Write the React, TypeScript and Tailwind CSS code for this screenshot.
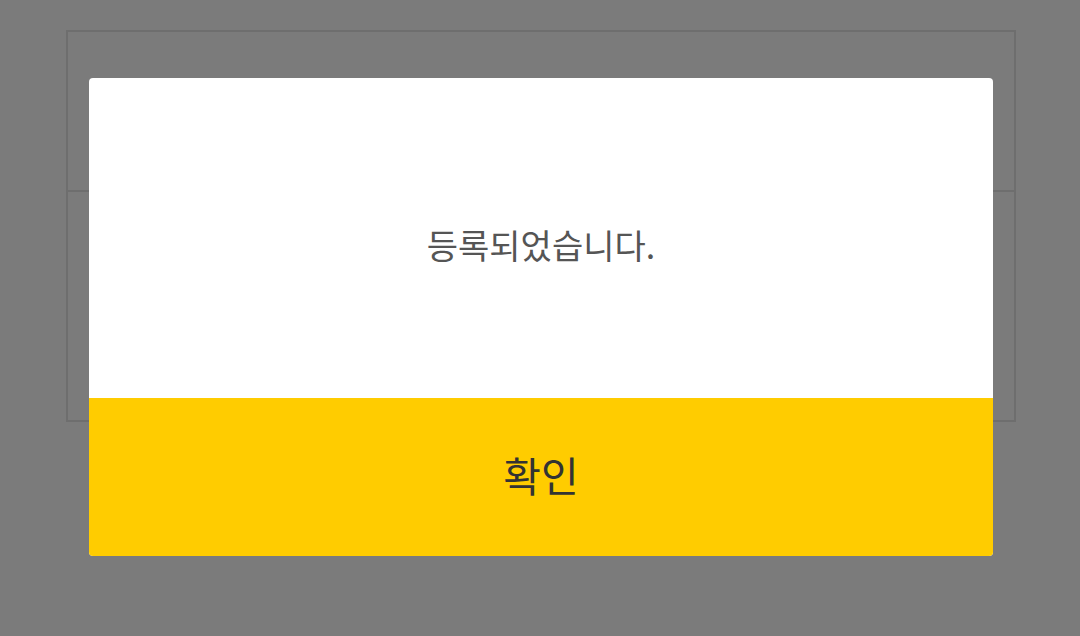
export default function App() {
  return (
    <div
      className="relative h-[636px] w-[1080px] overflow-hidden bg-[#7b7b7b] pl-[66px] pt-[30px]"
      style={{ fontFamily: '"Noto Sans CJK KR", "Noto Sans", sans-serif' }}
    >
      {/* page behind the dim layer */}
      <div className="flex h-[392px] w-[950px] flex-col border-2 border-[#6e6e6e]">
        <div className="h-[160px] border-b-2 border-[#6e6e6e]" />
        <div className="flex-1" />
      </div>

      {/* alert dialog */}
      <div className="absolute left-[89px] top-[78px] flex h-[478px] w-[904px] flex-col overflow-hidden rounded-[4px] bg-white">
        <div className="flex h-[320px] items-center justify-center pt-[14px]">
          <p className="text-[34px] leading-none text-[#555555]">등록되었습니다.</p>
        </div>
        <button className="flex flex-1 items-center justify-center bg-[#ffcc00] pb-[6px] text-[41px] leading-none text-[#333333]">
          확인
        </button>
      </div>
    </div>
  );
}
